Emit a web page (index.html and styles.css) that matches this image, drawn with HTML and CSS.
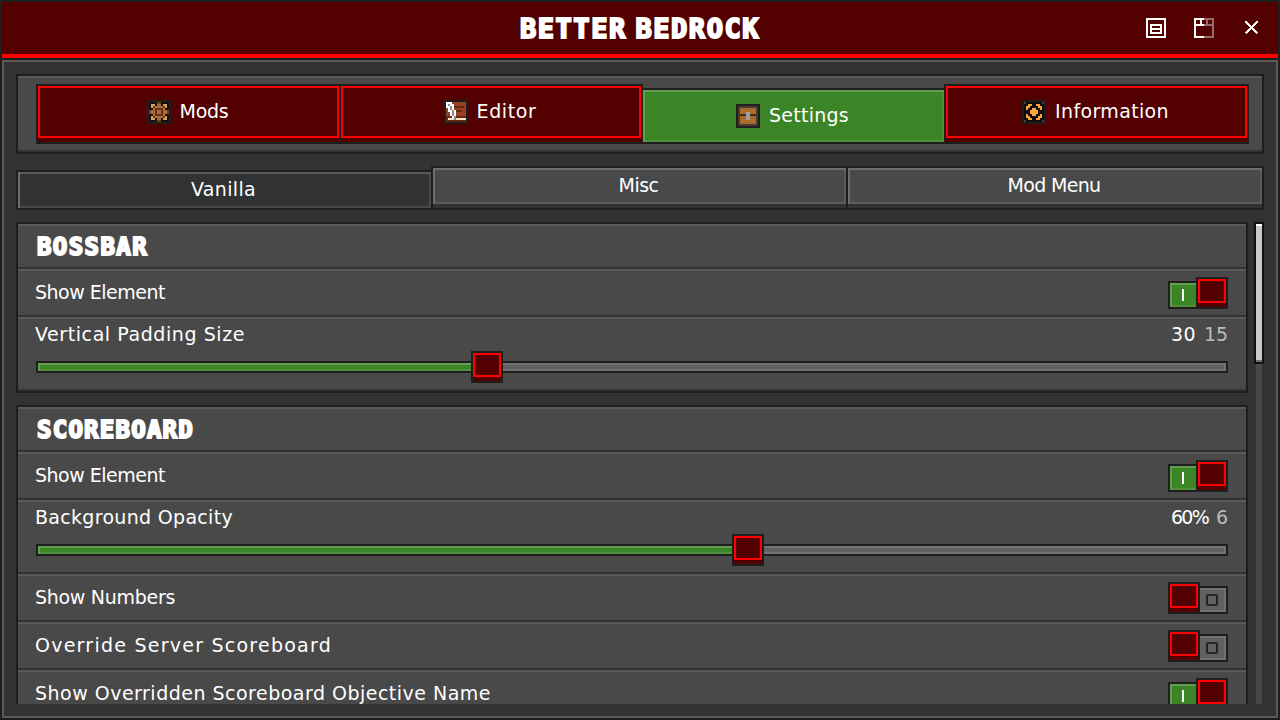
FILE: index.html
```html
<!DOCTYPE html>
<html lang="en">
<head>
<meta charset="utf-8">
<title>Better Bedrock</title>
<link rel="stylesheet" href="styles.css">
</head>
<body>
<div class="window">
  <header class="titlebar">
    <h1 class="title" data-w="240">BETTER BEDROCK</h1>
    <div class="window-actions">
      <svg class="action" viewBox="0 0 10 10"><path fill="#fff" fill-rule="evenodd" d="M0 0h10v10H0zM1 1v8h8V1zM2 3h6v5H2zM3 4v1h4V4zM3 6v1h4V6z"/></svg>
      <svg class="action" viewBox="0 0 10 10"><path fill="#fff" d="M0 0h5v1H4v2h1v1H1v5h4v1H0zM1 1v2h2V1z" fill-rule="evenodd"/><path fill="#fff" fill-opacity=".42" fill-rule="evenodd" d="M5 0h5v10H5V9h4V4H5V3h1V1H5zM7 1v2h2V1z"/></svg>
      <svg class="action close" viewBox="0 0 13 13"><path fill="none" stroke="#fff" stroke-width="2" d="M.5.5l12 12M12.5.5l-12 12"/></svg>
    </div>
  </header>
  <main class="body">
    <nav class="nav">
      <a class="nav-btn">
        <svg class="nav-icon" viewBox="-1 -1 12 12"><path fill="#1e1e1f" d="M-1-1h12v12H-1z"/><path fill="#17110d" d="M0 0h10v10H0z"/><path stroke="#d0a068" d="M1 1.5h2M7 1.5h2M1 2.5h1M8 2.5h1M1 7.5h1M8 7.5h1M1 8.5h2M7 8.5h2"/><path stroke="#b0683a" d="M4 1.5h2M3 2.5h4M2 3.5h6M1 4.5h8M1 5.5h8M2 6.5h6M3 7.5h4M4 8.5h2"/><path stroke="#6e3c22" d="M4 .5h2M0 4.5h1M0 5.5h1M9 4.5h1M9 5.5h1M4 9.5h2M2 2.5h1M7 2.5h1M2 7.5h1M7 7.5h1"/><path stroke="#5f3219" d="M3 3.5h4M3 4.5h1M6 4.5h1M3 5.5h1M6 5.5h1M3 6.5h4"/></svg>
        <span class="label" data-w="49">Mods</span>
      </a>
      <a class="nav-btn">
        <svg class="nav-icon" viewBox="-1 -1 12 12"><path fill="#1e1e1f" d="M-1-1h12v12H-1z"/><path fill="#983f25" d="M0 0h10v10H0z"/><path stroke="#642713" d="M4 2.5h5M5 4.5h3M0 7.5h10M0 8.5h1M0 9.5h10"/><path stroke="#fff" d="M0 .5h3M0 1.5h4M0 2.5h4M1 3.5h3M1 4.5h4M2 5.5h3M2 6.5h3M3 7.5h1"/><path stroke="#ffe0c4" d="M1 8.5h9"/><path stroke="#8a8a8a" d="M1 1.5h1M2 2.5h1M2 3.5h1M3 4.5h1M3 5.5h1M3 6.5h1M4 7.5h1M4 8.5h1"/></svg>
        <span class="label" data-w="60">Editor</span>
      </a>
      <a class="nav-btn active">
        <svg class="nav-icon" viewBox="-1 -1 12 12"><path fill="#1e1e1f" d="M-1-1h12v12H-1z"/><path fill="#483c2e" d="M0 0h10v10H0z"/><path fill="#a96d29" d="M1 1h8v3H1zM1 5h8v4H1z"/><path fill="#3d3022" d="M1 4h8v1H1z"/><path fill="#9d9d9d" d="M4 3h2v4H4z"/></svg>
        <span class="label" data-w="80">Settings</span>
      </a>
      <a class="nav-btn">
        <svg class="nav-icon" viewBox="-1 -1 12 12"><path fill="#1e1e1f" d="M-1-1h12v12H-1z"/><path fill="#120e0b" d="M0 0h10v10H0z"/><path stroke="#483c33" d="M0 .5h1M9 .5h1M0 9.5h1M9 9.5h1"/><path stroke="#ffa340" d="M2 1.5h2M6 1.5h2M1 2.5h2M7 2.5h2M1 3.5h1M4 3.5h2M8 3.5h1M3 4.5h4M3 5.5h4M1 6.5h1M4 6.5h2M8 6.5h1M1 7.5h2M7 7.5h2M2 8.5h2M6 8.5h2"/></svg>
        <span class="label" data-w="114">Information</span>
      </a>
    </nav>

    <div class="tabs">
      <a class="tab selected"><span class="label" data-w="65">Vanilla</span></a>
      <a class="tab"><span class="label" data-w="40">Misc</span></a>
      <a class="tab"><span class="label" data-w="93">Mod Menu</span></a>
    </div>

    <div class="scroll">
      <div class="cards">
        <section class="card">
          <div class="row head"><h2 class="heading" data-w="111">BOSSBAR</h2></div>
          <div class="row option"><span class="label" data-w="130">Show Element</span>
            <span class="toggle on"><i class="state"></i><i class="knob"></i></span></div>
          <div class="row range">
            <div class="range-text"><span class="label" data-w="210">Vertical Padding Size</span><span class="values"><span class="label" data-w="25">30</span><span class="label default" data-w="24">15</span></span></div>
            <div class="slider"><i class="fill" style="width:434px"></i><i class="knob"></i></div>
          </div>
        </section>
        <section class="card">
          <div class="row head"><h2 class="heading" data-w="157">SCOREBOARD</h2></div>
          <div class="row option"><span class="label" data-w="130">Show Element</span>
            <span class="toggle on"><i class="state"></i><i class="knob"></i></span></div>
          <div class="row range">
            <div class="range-text"><span class="label" data-w="198">Background Opacity</span><span class="values"><span class="label" data-w="37">60%</span><span class="label default" data-w="12">6</span></span></div>
            <div class="slider"><i class="fill" style="width:695px"></i><i class="knob"></i></div>
          </div>
          <div class="row option"><span class="label" data-w="140">Show Numbers</span>
            <span class="toggle"><i class="knob"></i><i class="state"></i></span></div>
          <div class="row option"><span class="label" data-w="297">Override Server Scoreboard</span>
            <span class="toggle"><i class="knob"></i><i class="state"></i></span></div>
          <div class="row option"><span class="label" data-w="456">Show Overridden Scoreboard Objective Name</span>
            <span class="toggle on"><i class="state"></i><i class="knob"></i></span></div>
        </section>
      </div>
      <div class="scrollbar"><div class="thumb"></div></div>
    </div>
  </main>
</div>
<script src="fit.js"></script>
</body>
</html>
```
FILE: styles.css
```css
*, *::before { box-sizing: border-box; }
body { margin: 0; background: #1e1e1f; color: #fff; overflow: hidden; }

.window {
  width: 1280px;
  height: 720px;
  padding: 2px;
  display: flex;
  flex-direction: column;
  gap: 2px;
}

/* Title bar */
.titlebar {
  flex: none;
  height: 56px;
  display: grid;
  grid-template-columns: 1fr auto 1fr;
  background: #530000;
  border-bottom: 4px solid #f00;
}
.title, .heading {
  margin: 0;
  font-family: "DejaVu Sans Mono", monospace;
  font-weight: 700;
  white-space: nowrap;
  -webkit-text-stroke: 2px #fff;
}
.title { grid-column: 2; font-size: 27px; line-height: 54px; height: 52px; word-spacing: -9px; }
.window-actions {
  display: flex;
  justify-content: flex-end;
  align-items: center;
  gap: 28px;
  padding-right: 20px;
}
.action { width: 20px; height: 20px; shape-rendering: crispEdges; }
.action.close { width: 13px; height: 13px; margin: 0 0 1px 3px; }

/* Page body */
.body {
  flex: 1;
  min-height: 0;
  display: flex;
  flex-direction: column;
  padding: 12px;
  background: #323232;
  border: 2px solid #5a5a5a;
}
.label {
  font-family: "DejaVu Sans", sans-serif;
  font-size: 19px;
  line-height: 24px;
  white-space: nowrap;
}

/* Main navigation */
.nav {
  flex: none;
  height: 80px;
  display: grid;
  grid-template-columns: 301px 300px 301px 301px;
  gap: 2px;
  align-items: end;
  padding: 6px 0 10px 20px;
  background: #494949;
  border: 2px solid #1e1e1f;
  box-shadow: inset 0 2px #5a5a5a, inset 0 -2px #333;
}
.nav-btn {
  height: 56px;
  display: flex;
  align-items: center;
  justify-content: center;
  gap: 9px;
  padding: 0 2px 4px 0;
  box-shadow: 0 0 0 2px #1e1e1f, inset 0 -4px #530000, inset 0 -6px #f00, inset 0 2px #f00;
  background: linear-gradient(#f00, #f00) 0 0 / 2px 52px no-repeat, linear-gradient(#f00, #f00) 100% 0 / 2px 52px no-repeat, #530000;
}
.nav-btn.active {
  height: 52px;
  padding: 0 2px 0 0;
  background: #3c8527;
  box-shadow: 0 0 0 2px #1e1e1f, inset 2px 2px #639d52, inset -2px -2px #4f913c;
}
.nav-icon { flex: none; width: 24px; height: 24px; shape-rendering: crispEdges; }
.nav .label, .tab .label { margin-bottom: 2px; }

/* Sub tabs */
.tabs {
  flex: none;
  height: 44px;
  margin-top: 12px;
  display: grid;
  grid-template-columns: 413px 413px 414px;
  gap: 2px;
  align-items: end;
  padding: 2px;
}
.tab {
  height: 40px;
  padding: 0 2px 4px 0;
  display: flex;
  align-items: center;
  justify-content: center;
  background: #48494a;
  box-shadow: 0 0 0 2px #1e1e1f, inset 0 -4px #313233, inset 2px 2px #6d6d6e, inset -2px -6px #5a5b5c;
}
.tab.selected {
  height: 36px;
  padding: 0 2px 0 0;
  background: #313233;
  box-shadow: 0 0 0 2px #1e1e1f, inset 2px 0 #6d6d6e, inset 0 2px #5a5b5c, inset -2px -2px #48494a;
}

/* Option cards */
.scroll {
  flex: 1;
  min-height: 0;
  margin-top: 12px;
  display: flex;
  justify-content: space-between;
  overflow: hidden;
}
.cards { width: 1232px; display: flex; flex-direction: column; gap: 12px; }
.card { flex: none; border: 2px solid #1e1e1f; background: #494949; }
.row {
  padding: 0 18px;
  border-top: 2px solid #5a5a5a;
  border-bottom: 2px solid #333;
}
.head { height: 45px; padding-left: 19px; }
.heading { font-size: 24px; line-height: 43px; }
.option { height: 48px; display: flex; justify-content: space-between; padding-top: 6px; }
.option .label { line-height: 32px; margin-top: -1px; }
.range { height: 74px; padding-top: 3px; }
.option .label, .range-text > .label { margin-left: -1px; }
.range-text { display: flex; justify-content: space-between; }
.values { display: flex; gap: 8px; }
.default { color: #bcbcbc; }

.knob {
  flex: none;
  width: 32px;
  height: 32px;
  border: 2px solid #1e1e1f;
  background: #530000;
}
.knob::before { content: ""; display: block; height: 24px; border: 2px solid #f00; }

.slider {
  height: 12px;
  margin-top: 15px;
  border: 2px solid #1e1e1f;
  display: flex;
  align-items: center;
  background: #606163;
  box-shadow: inset 0 2px #737375, inset -2px -2px #707173;
}
.slider .fill {
  flex: none;
  height: 8px;
  background: #3c8527;
  box-shadow: inset 2px 2px #639d52, inset 0 -2px #4f913c;
}
.slider .knob { height: 32px; margin-left: -1px; }

.toggle { display: flex; align-items: flex-end; height: 32px; }
.state {
  width: 28px;
  height: 28px;
  border: 2px solid #1e1e1f;
  border-left: 0;
  background: #606163;
  box-shadow: inset 0 2px #737375, inset -2px -2px #707173;
  display: flex;
  align-items: center;
  justify-content: center;
}
.toggle .state::before {
  content: "";
  width: 12px;
  height: 12px;
  margin-right: 2px;
  border: 2px solid #252526;
  border-radius: 2px;
}
.toggle.on .state {
  border-left: 2px solid #1e1e1f;
  border-right: 0;
  background: #3c8527;
  box-shadow: inset 2px 2px #639d52, inset 0 -2px #4f913c;
}
.toggle.on .state::before {
  width: 2px;
  margin: 0;
  border: 0;
  border-radius: 0;
  background: #fff;
}

.scrollbar { width: 10px; background: linear-gradient(#484848, #484848) 2px 0 / 6px 100% no-repeat; }
.thumb {
  height: 142px;
  border: 2px solid #111;
  background: #c9c9c9;
  box-shadow: inset 0 2px #fff, inset 0 -2px #707070;
}
```
FILE: fit.js
```javascript
// Spread each label's letters so that it fills its declared width.
document.querySelectorAll('[data-w]').forEach(function (el) {
  var probe = document.createElement('span');
  probe.textContent = el.textContent;
  el.textContent = '';
  el.appendChild(probe);
  var natural = probe.getBoundingClientRect().width;
  var text = probe.textContent;
  el.textContent = text;
  el.style.letterSpacing = ((Number(el.dataset.w) - natural) / text.length).toFixed(3) + 'px';
});
```
